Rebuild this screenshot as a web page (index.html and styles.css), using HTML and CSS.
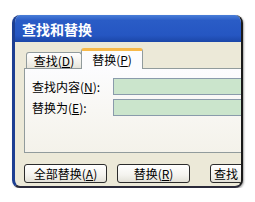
FILE: index.html
```html
<!DOCTYPE html>
<html lang="zh-CN">
<head>
    <meta charset="UTF-8">
    <title>查找和替换</title>
    <link rel="stylesheet" href="styles.css">
</head>
<body>
    <div class="window">
        <div class="titlebar">查找和替换</div>
        <div class="content">
            <div class="tabs">
                <div class="tab">查找(<u>D</u>)</div>
                <div class="tab active">替换(<u>P</u>)</div>
            </div>
            <div class="panel">
                <div class="row">
                    <label>查找内容(<u>N</u>):</label>
                    <div class="field"></div>
                </div>
                <div class="row">
                    <label>替换为(<u>E</u>):</label>
                    <div class="field"></div>
                </div>
            </div>
            <div class="buttons">
                <button class="btn btn-all">全部替换(<u>A</u>)</button>
                <button class="btn btn-one">替换(<u>R</u>)</button>
                <button class="btn btn-next">查找</button>
            </div>
        </div>
    </div>
</body>
</html>
```

FILE: styles.css
```css
* {
    margin: 0;
    padding: 0;
    box-sizing: border-box;
}

body {
    background: #fff;
    font-family: "Noto Sans CJK SC", "Noto Sans", sans-serif;
    font-size: 12px;
    color: #000;
}

.window {
    margin: 15px 0 0 12px;
    width: 231px;
    height: 173px;
    border-left: 3px solid #1d3f92;
    border-right: 2px solid #1a1a1a;
    border-bottom: 2px solid #2a2a3a;
    border-radius: 8px;
    overflow: hidden;
    background: #ece9d8;
    box-shadow: 1px 1px 2px rgba(0, 0, 0, 0.35);
}

.titlebar {
    height: 27px;
    line-height: 29px;
    padding-left: 7px;
    color: #fff;
    font-size: 14px;
    font-weight: bold;
    background: linear-gradient(to bottom, #4a7ed8 0%, #2a5cc6 20%, #2556c2 75%, #1c47a8 100%);
    white-space: nowrap;
}

.content {
    padding: 6px 0 0 9px;
}

.tabs {
    display: flex;
    align-items: flex-end;
    height: 20px;
    padding-left: 2px;
    position: relative;
    z-index: 1;
}

.tab {
    height: 16px;
    line-height: 15px;
    width: 56px;
    text-align: center;
    border: 1px solid #919b9c;
    border-bottom: none;
    border-radius: 3px 3px 0 0;
    background: linear-gradient(to bottom, #fff 0%, #f3f2ec 60%, #e6e4da 100%);
    white-space: nowrap;
}

.tab.active {
    height: 21px;
    width: 62px;
    margin-bottom: -1px;
    margin-left: -1px;
    line-height: 18px;
    background: #fcfcfe;
    border-top: 3px solid #f7b94a;
}

.panel {
    width: 240px;
    height: 85px;
    border: 1px solid #919b9c;
    background: linear-gradient(to bottom, #fcfcfe 0%, #f8f7f3 50%, #f4f2ea 100%);
    padding: 9px 0 0 7px;
    display: flex;
    flex-direction: column;
    gap: 4px;
}

.row {
    display: flex;
    align-items: center;
    height: 17px;
}

.row label {
    width: 81px;
    white-space: nowrap;
    line-height: 17px;
}

.field {
    flex: 1;
    height: 17px;
    border: 1px solid #8a9bab;
    background: #cbe5cc;
}

.buttons {
    display: flex;
    margin-top: 11px;
    white-space: nowrap;
}

.btn {
    height: 19px;
    font-family: inherit;
    font-size: 12px;
    line-height: 16px;
    border: 1px solid #2b2b2b;
    border-radius: 3px;
    background: linear-gradient(to bottom, #fff 0%, #f4f3ee 60%, #e3e1d8 100%);
    flex-shrink: 0;
}

.btn-all {
    width: 83px;
}

.btn-one {
    width: 73px;
    margin-left: 10px;
}

.btn-next {
    width: 60px;
    margin-left: 20px;
    text-align: left;
    padding-left: 3px;
}
```
